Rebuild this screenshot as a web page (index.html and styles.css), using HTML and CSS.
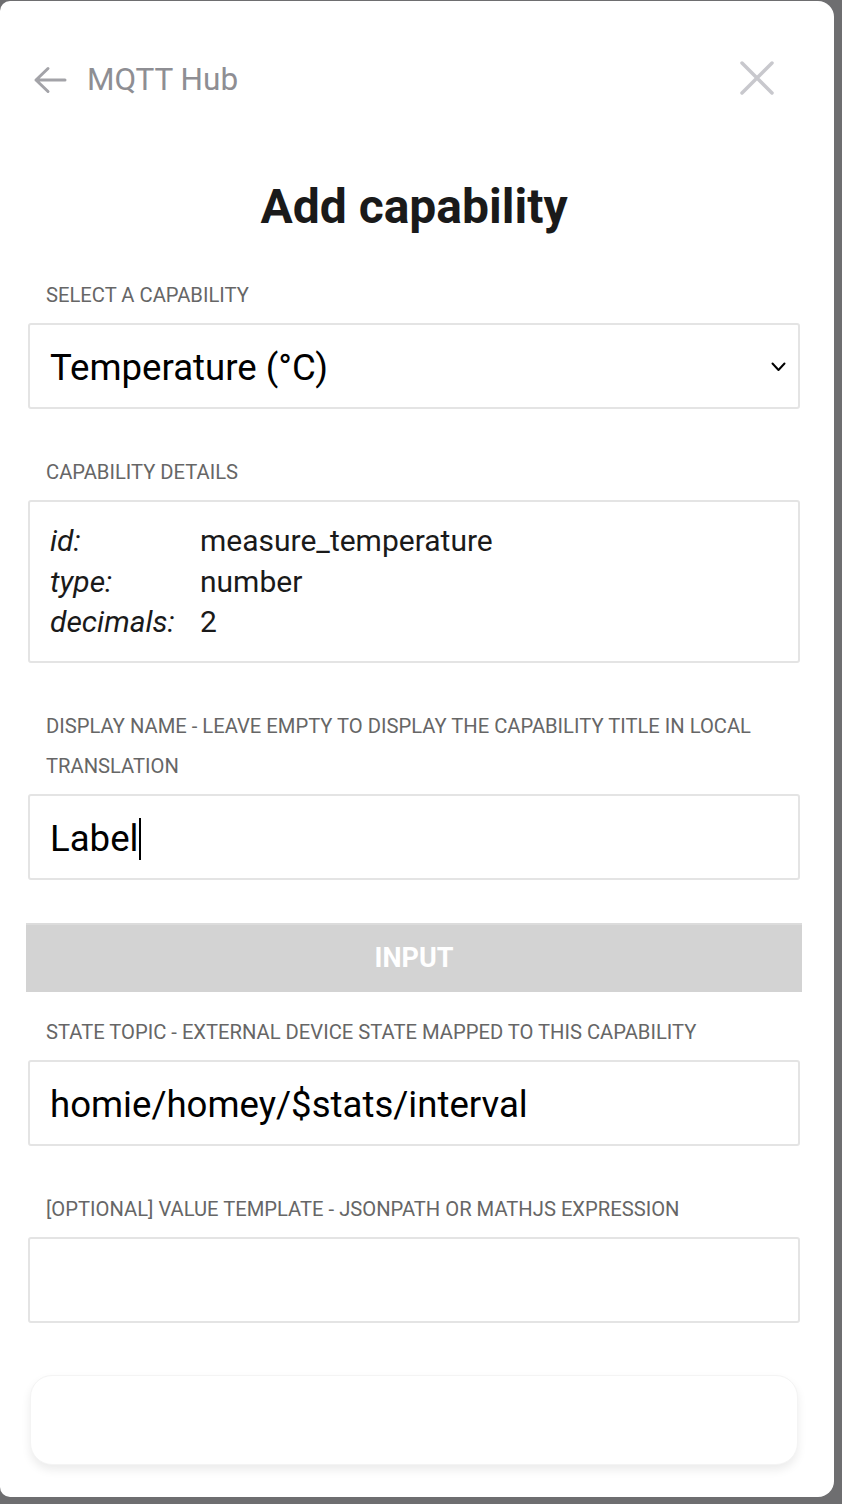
FILE: index.html
```html
<!DOCTYPE html>
<html lang="en">
<head>
<meta charset="utf-8">
<title>Add capability</title>
<link rel="stylesheet" href="styles.css">
</head>
<body>
<div class="sheet">
  <header class="topbar">
    <div class="back">
      <svg class="back-icon" width="34" height="28" viewBox="0 0 34 28" aria-hidden="true">
        <path d="M32 14 H3 M15 2.5 L3 14 L15 25.5" fill="none" stroke="#a3a3a8" stroke-width="3" stroke-linecap="round" stroke-linejoin="round"/>
      </svg>
      <span class="back-text">MQTT Hub</span>
    </div>
    <svg class="close-icon" width="34" height="34" viewBox="0 0 34 34" aria-hidden="true">
      <path d="M2 2 L32 32 M32 2 L2 32" fill="none" stroke="#c8c8cd" stroke-width="3.5" stroke-linecap="round"/>
    </svg>
  </header>

  <h1 class="title">Add capability</h1>

  <div class="form">
    <div class="group">
      <div class="label">Select a capability</div>
      <div class="field select">
        <span class="field-text">Temperature (°C)</span>
        <svg class="chevron" width="15" height="10" viewBox="0 0 15 10" aria-hidden="true">
          <path d="M1.5 1.5 L7.5 8 L13.5 1.5" fill="none" stroke="#000" stroke-width="2" stroke-linecap="round" stroke-linejoin="round"/>
        </svg>
      </div>
    </div>

    <div class="group">
      <div class="label">Capability details</div>
      <div class="details">
        <div class="row"><span class="key">id:</span><span class="val">measure_temperature</span></div>
        <div class="row"><span class="key">type:</span><span class="val">number</span></div>
        <div class="row"><span class="key">decimals:</span><span class="val">2</span></div>
      </div>
    </div>

    <div class="group">
      <div class="label">Display name - leave empty to display the capability title in local translation</div>
      <div class="field"><span class="field-text">Label</span><span class="caret"></span></div>
    </div>

    <div class="section-bar">INPUT</div>

    <div class="group tight">
      <div class="label">State topic - external device state mapped to this capability</div>
      <div class="field"><span class="field-text">homie/homey/$stats/interval</span></div>
    </div>

    <div class="group">
      <div class="label">[Optional] value template - JSONpath or mathJS expression</div>
      <div class="field"></div>
    </div>

    <div class="card"></div>
  </div>
</div>
</body>
</html>
```

FILE: styles.css
```css
html, body {
  margin: 0;
  padding: 0;
}

body {
  background: #6e6e70;
  font-family: Roboto, "Liberation Sans", Arial, sans-serif;
  width: 842px;
  height: 1504px;
  overflow: hidden;
}

.sheet {
  box-sizing: border-box;
  width: 834px;
  height: 1496px;
  margin-top: 1px;
  background: #ffffff;
  border-radius: 10px 16px 16px 10px;
  padding: 61px 34px 0 28px;
}

.topbar {
  display: flex;
  align-items: center;
  justify-content: space-between;
  padding: 0 26px 0 5px;
  height: 36px;
}

.back {
  display: flex;
  align-items: center;
  gap: 20px;
}

.back-icon {
  display: block;
}

.back-text {
  font-size: 31.5px;
  line-height: 36px;
  color: #8e8e93;
}

.close-icon {
  display: block;
  margin-top: -4px;
}

.title {
  margin: 81px 0 40px;
  text-align: center;
  font-size: 48px;
  line-height: 56px;
  font-weight: 700;
  color: #1a1a1a;
}

.form {
  display: flex;
  flex-direction: column;
  gap: 43px;
}

.group {
  display: flex;
  flex-direction: column;
  gap: 8px;
}

.group.tight {
  margin-top: -23px;
}

.label {
  padding: 0 18px;
  font-size: 20.2px;
  line-height: 40px;
  text-transform: uppercase;
  color: #666666;
}

.field {
  box-sizing: border-box;
  height: 86px;
  border: 2px solid #e4e4e4;
  border-radius: 3px;
  display: flex;
  align-items: center;
  padding: 3px 12px 0 20px;
}

.field-text {
  font-size: 36.6px;
  line-height: 42px;
  color: #000;
}

.select {
  justify-content: space-between;
}

.chevron {
  display: block;
  margin-top: -1px;
}

.caret {
  display: block;
  width: 2px;
  height: 42px;
  background: #000;
  margin-left: 1px;
}

.details {
  box-sizing: border-box;
  height: 163px;
  border: 2px solid #e4e4e4;
  border-radius: 3px;
  padding: 19px 20px;
  display: flex;
  flex-direction: column;
}

.row {
  display: flex;
  font-size: 30px;
  line-height: 40.5px;
  color: #1a1a1a;
}

.key {
  width: 150px;
  font-style: italic;
}

.section-bar {
  margin: 0 -2px;
  height: 69px;
  box-sizing: border-box;
  border-top: 2px solid #dcdcdc;
  background: #d3d3d3;
  color: #ffffff;
  font-weight: 700;
  font-size: 27px;
  display: flex;
  align-items: center;
  justify-content: center;
  padding-bottom: 2px;
}

.card {
  margin: 9px 2px 0;
  height: 88px;
  border-radius: 22px;
  background: #ffffff;
  border: 1px solid #f4f4f4;
  box-shadow: 0 5px 10px rgba(0, 0, 0, 0.08);
}
```
